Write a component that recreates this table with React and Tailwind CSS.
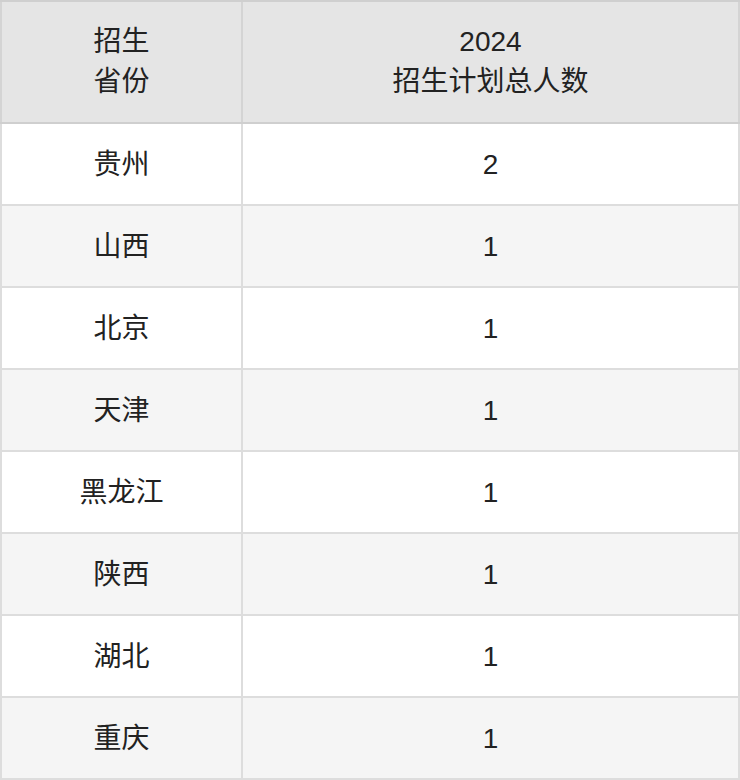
import React from 'react';

const rows = [
    { province: '贵州', total: 2 },
    { province: '山西', total: 1 },
    { province: '北京', total: 1 },
    { province: '天津', total: 1 },
    { province: '黑龙江', total: 1 },
    { province: '陕西', total: 1 },
    { province: '湖北', total: 1 },
    { province: '重庆', total: 1 },
];

export default function App() {
    return (
        <div
            className="w-[740px] bg-white text-[#222] text-[28px] leading-[40px]"
            style={{ fontFamily: '"Liberation Sans", "Noto Sans CJK SC", sans-serif' }}
        >
            {/* header */}
            <div className="flex h-[124px] bg-[#e5e5e5] border-t-2 border-b-2 border-[#cfcfcf]">
                <div className="w-[243px] shrink-0 flex items-center justify-center text-center border-l-2 border-r-2 border-[#d4d4d4]">
                    <div>招生<br />省份</div>
                </div>
                <div className="flex-1 flex items-center justify-center text-center border-r-2 border-[#d4d4d4]">
                    <div>2024<br />招生计划总人数</div>
                </div>
            </div>

            {rows.map((r, i) => (
                <div
                    key={r.province}
                    className={`flex h-[82px] border-b-2 border-[#dddddd] ${i % 2 === 0 ? 'bg-white' : 'bg-[#f5f5f5]'}`}
                >
                    <div className="w-[243px] shrink-0 flex items-center justify-center pt-[2px] border-l-2 border-r-2 border-[#dddddd]">
                        {r.province}
                    </div>
                    <div className="flex-1 flex items-center justify-center pt-[2px] border-r-2 border-[#dddddd]">
                        {r.total}
                    </div>
                </div>
            ))}
        </div>
    );
}
